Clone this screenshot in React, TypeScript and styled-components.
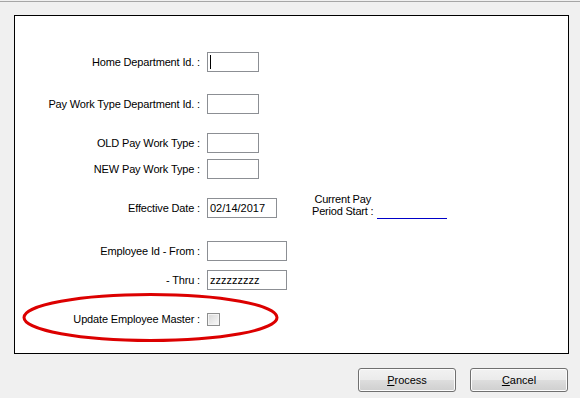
import React from 'react'
import styled, { createGlobalStyle } from 'styled-components'

const GlobalStyle = createGlobalStyle`
  html, body {
    margin: 0;
    padding: 0;
    background: #f0f0f0;
  }
  body {
    font-family: 'Liberation Sans', Arial, sans-serif;
    font-size: 11px;
    color: #000;
  }
`

const Window = styled.div`
  width: 580px;
  height: 398px;
  box-sizing: border-box;
  padding-top: 1px;
  background: #f0f0f0;
  overflow: hidden;
`

const TopEdge = styled.div`
  height: 1px;
  background: #a6a6a6;
`

const Panel = styled.div`
  margin: 13px 0 0 14px;
  width: 555px;
  height: 339px;
  box-sizing: border-box;
  border: 1px solid #000;
  background: #fff;
  padding-top: 36px;
  display: flex;
  flex-direction: column;
`

const Row = styled.div<{ $gap?: number }>`
  position: relative;
  display: flex;
  align-items: center;
  height: 20px;
  margin-top: ${(p) => p.$gap ?? 0}px;
`

const Label = styled.div`
  width: 185px;
  margin-right: 7px;
  text-align: right;
  letter-spacing: -0.15px;
  white-space: nowrap;
`

const TextBox = styled.div<{ $width: number }>`
  position: relative;
  width: ${(p) => p.$width}px;
  height: 20px;
  box-sizing: border-box;
  border: 1px solid #8c8f94;
  background: #fff;
  padding: 0 2px;
  line-height: 18px;
  white-space: nowrap;
  overflow: hidden;
`

const Caret = styled.span`
  position: absolute;
  left: 2px;
  top: 2px;
  width: 1px;
  height: 14px;
  background: #000;
`

const CheckBox = styled.span`
  display: inline-block;
  width: 13px;
  height: 13px;
  box-sizing: border-box;
  border: 1px solid #8e8f8f;
  background: linear-gradient(135deg, #d6d6d6 0%, #ececec 60%, #fafafa 100%);
  box-shadow: inset 0 0 0 1px #f4f4f4;
  margin-top: 1px;
`

const CurrentPay = styled.div`
  display: flex;
  align-items: flex-end;
  margin-left: 35px;
  margin-bottom: 6px;
`

const Caption = styled.div`
  display: flex;
  flex-direction: column;
  align-items: center;
  line-height: 12px;
  letter-spacing: -0.2px;
  white-space: nowrap;
`

const BlankValue = styled.div`
  width: 70px;
  margin-left: 4px;
  margin-bottom: -2px;
  border-bottom: 1px solid #0000c8;
`

const Highlight = styled.svg`
  position: absolute;
  left: 7px;
  top: -17px;
  pointer-events: none;
`

const ButtonBar = styled.div`
  display: flex;
  justify-content: flex-end;
  gap: 14px;
  margin-top: 14px;
  padding-right: 12px;
`

const Button = styled.button`
  width: 98px;
  height: 24px;
  box-sizing: border-box;
  border: 1px solid #707070;
  border-radius: 3px;
  background: linear-gradient(#f2f2f2 0%, #ebebeb 48%, #dddddd 52%, #cfcfcf 100%);
  box-shadow: inset 0 0 0 1px #fcfcfc;
  font-family: 'Liberation Sans', Arial, sans-serif;
  font-size: 11px;
  color: #000;
  padding: 0;

  u {
    text-decoration: underline;
  }
`

type FieldProps = {
  label: string
  width: number
  value?: string
  gap?: number
  focused?: boolean
  children?: React.ReactNode
}

const Field = ({ label, width, value, gap, focused, children }: FieldProps) => (
  <Row $gap={gap}>
    <Label>{label}</Label>
    <TextBox $width={width}>
      {focused && <Caret />}
      {value}
    </TextBox>
    {children}
  </Row>
)

export default function App() {
  return (
    <Window>
      <GlobalStyle />
      <TopEdge />
      <Panel>
        <Field label='Home Department Id. :' width={52} focused />
        <Field label='Pay Work Type Department Id. :' width={52} gap={22} />
        <Field label='OLD Pay Work Type :' width={52} gap={19} />
        <Field label='NEW Pay Work Type :' width={52} gap={6} />
        <Field label='Effective Date :' width={70} value='02/14/2017' gap={19}>
          <CurrentPay>
            <Caption>
              <span>Current Pay</span>
              <span>Period Start :</span>
            </Caption>
            <BlankValue />
          </CurrentPay>
        </Field>
        <Field label='Employee Id - From :' width={80} gap={23} />
        <Field label='- Thru :' width={80} value='zzzzzzzzz' gap={9} />
        <Row $gap={19}>
          <Label>Update Employee Master :</Label>
          <CheckBox />
          <Highlight width='258' height='52' viewBox='0 0 258 52'>
            <ellipse
              cx='128.5'
              cy='25.5'
              rx='126.5'
              ry='23'
              fill='none'
              stroke='#dc0000'
              strokeWidth='3'
            />
          </Highlight>
        </Row>
      </Panel>
      <ButtonBar>
        <Button>
          <u>P</u>rocess
        </Button>
        <Button>
          <u>C</u>ancel
        </Button>
      </ButtonBar>
    </Window>
  )
}
